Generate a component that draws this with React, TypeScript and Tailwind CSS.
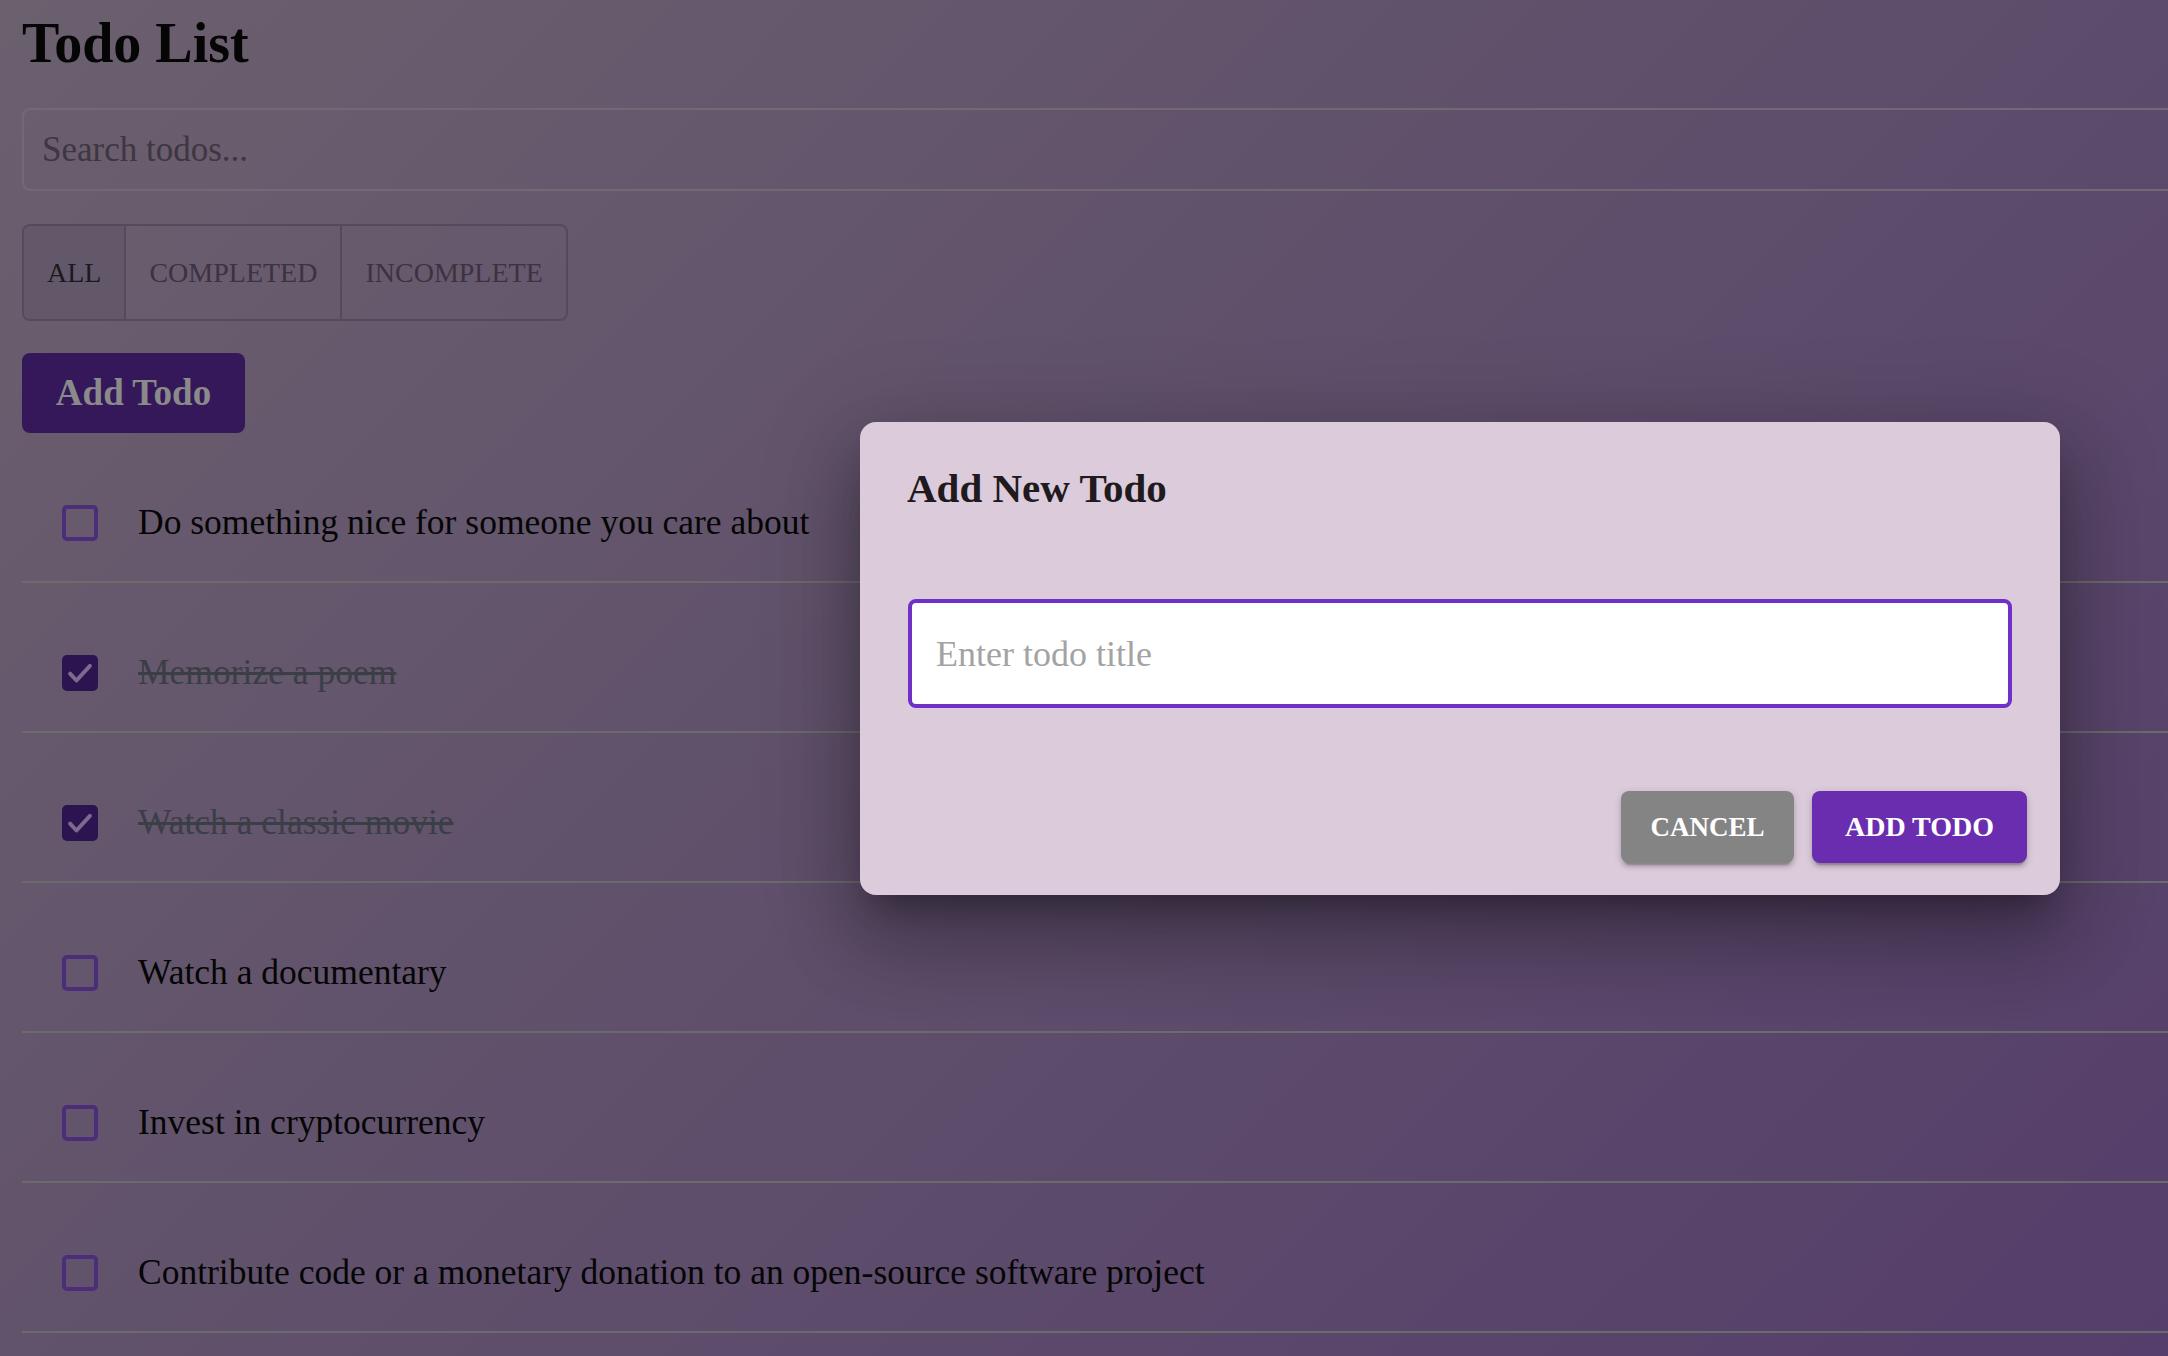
import { useState } from 'react';

type Todo = {
  id: number;
  title: string;
  completed: boolean;
};

const initialTodos: Todo[] = [
  { id: 1, title: 'Do something nice for someone you care about', completed: false },
  { id: 2, title: 'Memorize a poem', completed: true },
  { id: 3, title: 'Watch a classic movie', completed: true },
  { id: 4, title: 'Watch a documentary', completed: false },
  { id: 5, title: 'Invest in cryptocurrency', completed: false },
  { id: 6, title: 'Contribute code or a monetary donation to an open-source software project', completed: false },
];

const filters = ['ALL', 'COMPLETED', 'INCOMPLETE'];

function Checkbox({ checked }: { checked: boolean }) {
  if (checked) {
    return (
      <div className="flex h-[36px] w-[36px] shrink-0 items-center justify-center rounded-[5px] bg-[#2c1450]">
        <svg viewBox="0 0 24 24" className="h-[34px] w-[34px]" fill="none">
          <path d="M5 12.5l4.5 4.8L19 7" stroke="#7b6c8e" strokeWidth="2.8" strokeLinecap="round" strokeLinejoin="round" />
        </svg>
      </div>
    );
  }
  return <div className="h-[36px] w-[36px] shrink-0 rounded-[5px] border-[4px] border-[#4b2d7a]" />;
}

export default function App() {
  const [todos] = useState(initialTodos);
  const [filter] = useState('ALL');

  return (
    <div
      className="relative h-screen overflow-hidden bg-[linear-gradient(135deg,#6b606e_0%,#5f4f6b_50%,#553e6b_100%)] text-black"
      style={{ fontFamily: '"Liberation Serif", "Times New Roman", serif' }}
    >
      {/* page under the dialog (colours already dimmed by the backdrop) */}
      <div className="flex flex-col pl-[22px]">
        <h1 className="pt-[15px] text-[56px] font-bold leading-[56px] text-[#050505]">Todo List</h1>

        <input
          placeholder="Search todos..."
          className="mt-[37px] h-[83px] w-[calc(100%+8px)] rounded-[8px] border-2 border-[#716a74] bg-transparent px-[18px] text-[35px] outline-none placeholder:text-[#3e3641]"
        />

        <div className="mt-[33px] flex h-[97px] self-start overflow-hidden rounded-[8px] border-2 border-[#554a5c]">
          {filters.map((f, i) => (
            <button
              key={f}
              className={
                'px-[23px] text-[28px] ' +
                (i > 0 ? 'border-l-2 border-[#554a5c] ' : '') +
                (f === filter ? 'bg-[#62586a] text-[#1c1a1e]' : 'text-[#3b3340]')
              }
            >
              {f}
            </button>
          ))}
        </div>

        <button className="mt-[32px] h-[80px] w-[223px] rounded-[8px] bg-[#35185a] text-[37px] font-bold text-[#8a8a8a]">
          Add Todo
        </button>

        <ul className="flex flex-col">
          {todos.map((t) => (
            <li
              key={t.id}
              className="mt-[32px] flex h-[118px] shrink-0 items-center gap-[40px] border-b-2 border-[#6c6b6c] pl-[40px]"
            >
              <Checkbox checked={t.completed} />
              <span
                className={
                  'text-[35.5px] ' + (t.completed ? 'text-[#3b3e46] line-through' : 'text-[#050505]')
                }
              >
                {t.title}
              </span>
            </li>
          ))}
        </ul>
      </div>

      {/* dialog */}
      <div className="absolute left-[860px] top-[422px] flex w-[1200px] flex-col rounded-[16px] bg-[#dccbdb] pb-[32px] pt-[34px] shadow-[0_22px_30px_-14px_rgba(0,0,0,0.3),0_48px_76px_6px_rgba(0,0,0,0.2),0_18px_92px_16px_rgba(0,0,0,0.16)]">
        <h2 className="px-[47px] text-[41px] font-bold leading-[64px] text-[#1e1a1e]">Add New Todo</h2>

        <div className="px-[48px] pt-[79px]">
          <input
            placeholder="Enter todo title"
            className="h-[109px] w-full rounded-[8px] border-[4px] border-[#7030c8] bg-white px-[24px] text-[36px] outline-none placeholder:text-[#a3a3a3]"
          />
        </div>

        <div className="mt-[83px] flex justify-end gap-[18px] pr-[33px]">
          <button className="h-[72px] w-[173px] rounded-[8px] bg-[#848484] text-[27px] font-bold text-white shadow-[0_6px_2px_-4px_rgba(0,0,0,0.2),0_4px_4px_0_rgba(0,0,0,0.14),0_2px_10px_0_rgba(0,0,0,0.12)]">
            CANCEL
          </button>
          <button className="h-[72px] w-[215px] rounded-[8px] bg-[#6a2db0] text-[28px] font-bold text-white shadow-[0_6px_2px_-4px_rgba(0,0,0,0.2),0_4px_4px_0_rgba(0,0,0,0.14),0_2px_10px_0_rgba(0,0,0,0.12)]">
            ADD TODO
          </button>
        </div>
      </div>
    </div>
  );
}
